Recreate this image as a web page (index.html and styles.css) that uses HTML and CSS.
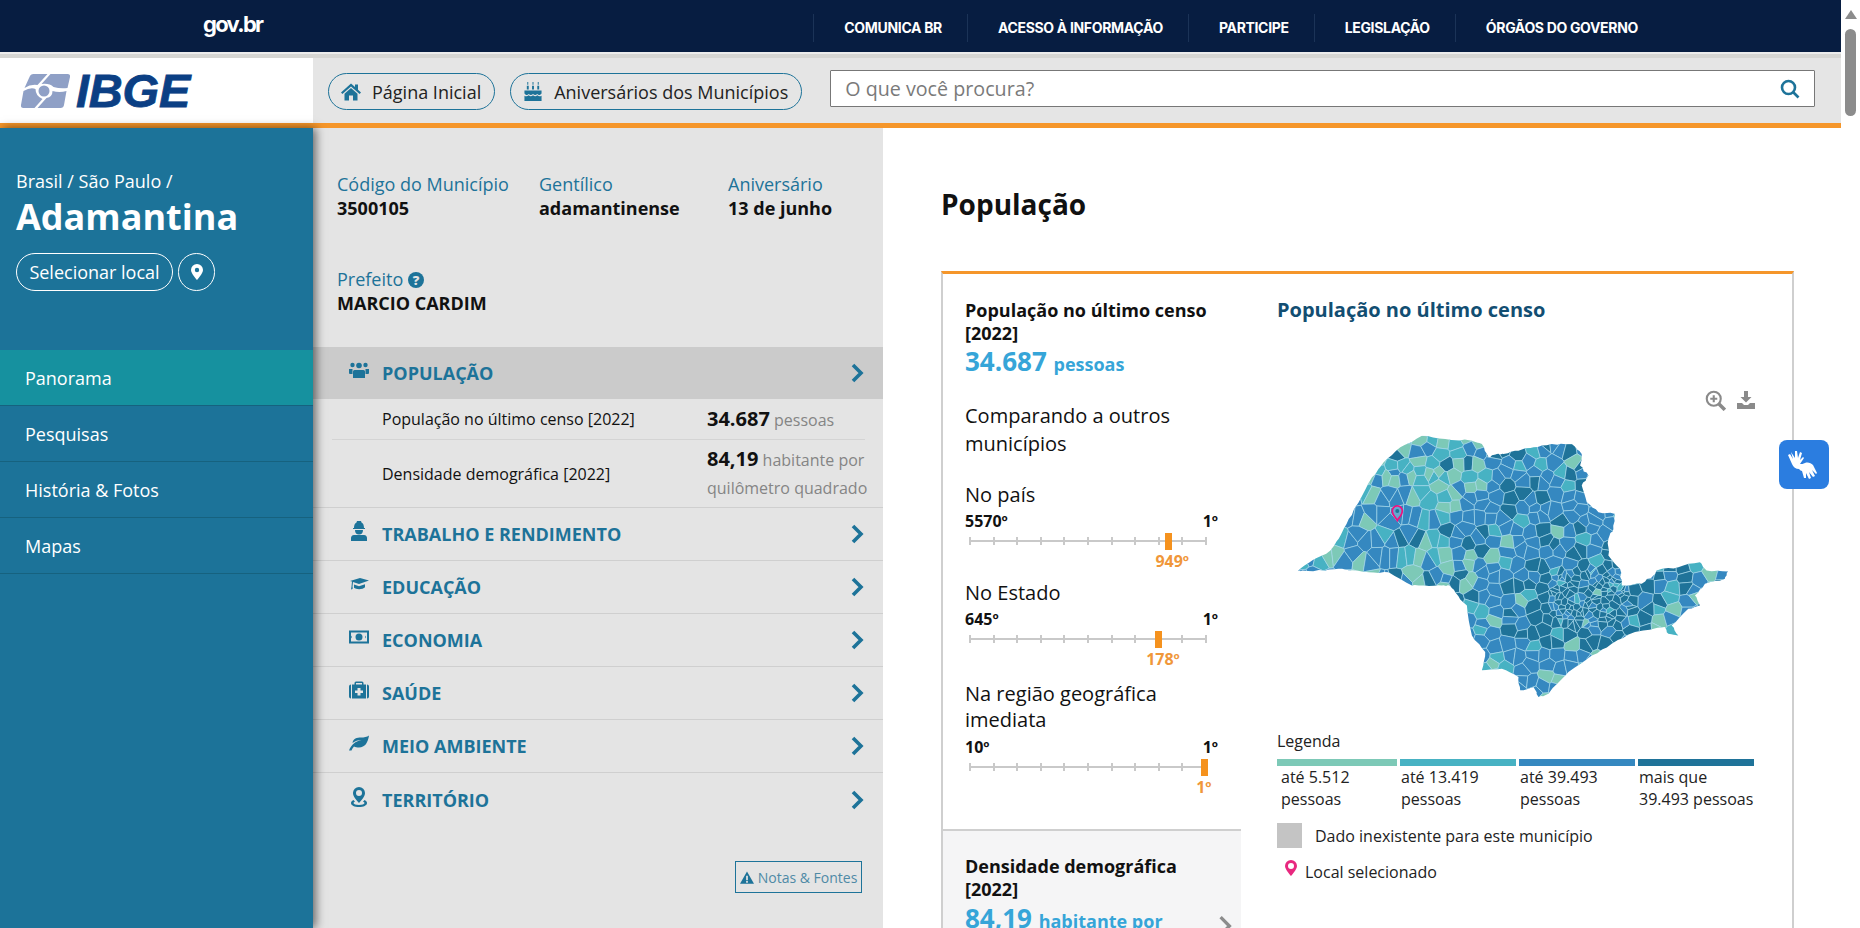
FILE: index.html
```html
<!DOCTYPE html>
<html lang="pt-BR">
<head>
<meta charset="utf-8">
<title>Adamantina - Panorama</title>
<link rel="stylesheet" href="styles.css">
</head>
<body>
<div class="page">
  <div class="site">
    <header class="gov-bar">
      <a class="gov-logo">gov.br</a>
      <nav class="gov-nav">
        <a>COMUNICA BR</a><a>ACESSO À INFORMAÇÃO</a><a>PARTICIPE</a><a>LEGISLAÇÃO</a><a>ÓRGÃOS DO GOVERNO</a>
      </nav>
    </header>
    <div class="band"></div>
    <div class="header">
      <div class="logo">
        <svg class="emblem" viewBox="0 0 50 34"><path class="em-fill" d="M9 3Q10 0 13 0H27L17 11Q10 10 4 14ZM30 0H47Q50 0 49.500 3L47 14Q40 15 33 13Q29 9 21 10ZM3 17Q10 13 15 15Q15 22 22 25L14 34H3Q0 34 .5 31ZM17 34 26 24Q32 23 32 17Q39 19 46 17L43.500 31Q43 34 40 34Z"/><circle class="em-fill" cx="23.500" cy="17" r="5.500"/></svg>
        <span class="logo-text">IBGE</span>
      </div>
      <div class="tools">
        <a class="pill">
          <svg class="pill-ic" viewBox="0 0 20 18"><path d="M10 1 0 10l1.400 1.400L10 4l8.600 7.400L20 10l-3-2.700V2h-3v2.600zM3.500 11.200V18H8v-5h4v5h4.500v-6.800L10 5.500z"/></svg>
          Página Inicial
        </a>
        <a class="pill">
          <svg class="pill-ic" viewBox="0 0 20 20"><path d="M4 0h1v3H4zM9.500 0h1v3h-1zM15 0h1v3h-1zM3.500 4h2v4h-2zM9 4h2v4H9zM14.500 4h2v4h-2zM1 9h18v3c-2 2-3 2-4.500.500-1.500 1.500-3 1.500-4.500 0-1.500 1.500-3 1.500-4.500 0C4 14 3 14 1 12zM1 14.500c2 1 3 .5 4.500-.5 1.500 1.500 3 1.500 4.500 0 1.500 1.500 3 1.500 4.500 0 1.500 1 2.500 1.500 4.500.5V20H1z"/></svg>
          Aniversários dos Municípios
        </a>
        <div class="search">
          <span class="placeholder">O que você procura?</span>
          <svg class="search-ic" viewBox="0 0 20 20"><circle cx="8.500" cy="8.500" r="6.500"/><path d="M13.500 13.500 18.500 18.500"/></svg>
        </div>
      </div>
    </div>

    <div class="content">
      <aside class="sidebar">
        <div class="crumb">Brasil / São Paulo /</div>
        <div class="city">Adamantina</div>
        <div class="select-row">
          <a class="select-btn">Selecionar local</a>
          <a class="pin-btn"><svg viewBox="0 0 12 16"><path fill-rule="evenodd" d="M6 0a6 6 0 0 0-6 6c0 3.500 6 10 6 10s6-6.500 6-10a6 6 0 0 0-6-6zm0 8.200a2.200 2.200 0 1 1 0-4.400 2.200 2.200 0 0 1 0 4.400z"/></svg></a>
        </div>
        <nav class="menu">
          <a class="menu-item active">Panorama</a>
          <a class="menu-item">Pesquisas</a>
          <a class="menu-item">História &amp; Fotos</a>
          <a class="menu-item">Mapas</a>
        </nav>
      </aside>

      <section class="panel">
        <div class="facts">
          <div><div class="fact-label">Código do Município</div><div class="fact-value">3500105</div></div>
          <div><div class="fact-label">Gentílico</div><div class="fact-value">adamantinense</div></div>
          <div><div class="fact-label">Aniversário</div><div class="fact-value">13 de junho</div></div>
        </div>
        <div class="mayor">
          <div class="fact-label">Prefeito <span class="help">?</span></div>
          <div class="fact-value">MARCIO CARDIM</div>
        </div>

        <div class="accordion">
          <div class="acc-row open">
            <svg class="acc-ic" viewBox="0 0 20 16"><circle cx="10" cy="3.500" r="2.800"/><circle cx="3.500" cy="3" r="2.200"/><circle cx="16.500" cy="3" r="2.200"/><path d="M5.500 8h9a1.500 1.500 0 0 1 1.500 1.500V16H4V9.500A1.500 1.500 0 0 1 5.500 8zM0 7h3.500v5H1a1 1 0 0 1-1-1zM20 7h-3.500v5H19a1 1 0 0 0 1-1z"/></svg>
            <span class="acc-title">POPULAÇÃO</span>
            <svg class="chev" viewBox="0 0 14 20"><path d="M3 2l8 8-8 8"/></svg>
          </div>
          <div class="stat-row first">
            <span class="stat-name">População no último censo [2022]</span>
            <span class="stat-val"><b>34.687</b> pessoas</span>
          </div>
          <div class="stat-row second">
            <span class="stat-name">Densidade demográfica [2022]</span>
            <span class="stat-val"><b>84,19</b> habitante por quilômetro quadrado</span>
          </div>
          <div class="acc-row">
            <svg class="acc-ic" viewBox="0 0 20 20"><path d="M5 7c0-3 1-5 2.500-5.500L8 0h4l.5 1.500C14 2 15 4 15 7h1v1H4V7zM6 9h8c0 3-1.500 4.500-4 4.500S6 12 6 9zM5 14h10c2 0 3 1.500 3 3v3H2v-3c0-1.500 1-3 3-3z"/></svg>
            <span class="acc-title">TRABALHO E RENDIMENTO</span>
            <svg class="chev" viewBox="0 0 14 20"><path d="M3 2l8 8-8 8"/></svg>
          </div>
          <div class="acc-row">
            <svg class="acc-ic" viewBox="0 0 20 14"><path d="M1 4 11 1l9 2.500-10 3.500-6-2-.5 4.500c0 .5.500 1.500 0 2.500l-1.500.5c0-1 .5-2 .5-3L3 4.500zM5 7.500l5 1.800 6-2v3c-2 2.500-9 2.500-11 .500z"/></svg>
            <span class="acc-title">EDUCAÇÃO</span>
            <svg class="chev" viewBox="0 0 14 20"><path d="M3 2l8 8-8 8"/></svg>
          </div>
          <div class="acc-row">
            <svg class="acc-ic" viewBox="0 0 20 13"><path fill-rule="evenodd" d="M0 0h20v13H0zM2 2v9h16V2zM10 3a3.500 3.500 0 1 1 0 7 3.500 3.500 0 0 1 0-7zM3 5a2 2 0 0 0 0 3zM17 5v3a2 2 0 0 1 0-3z"/></svg>
            <span class="acc-title">ECONOMIA</span>
            <svg class="chev" viewBox="0 0 14 20"><path d="M3 2l8 8-8 8"/></svg>
          </div>
          <div class="acc-row">
            <svg class="acc-ic" viewBox="0 0 20 17"><path fill-rule="evenodd" d="M0 5a2 2 0 0 1 2-2v14a2 2 0 0 1-2-2zM20 5a2 2 0 0 0-2-2v14a2 2 0 0 0 2-2zM7 0h6a1.500 1.500 0 0 1 1.500 1.500V3H17v14H3V3h2.500V1.500A1.500 1.500 0 0 1 7 0zm0 1.500V3h6V1.500zM8.500 6.500v2.500H6v2.500h2.500V14h3v-2.500H14V9h-2.500V6.500z"/></svg>
            <span class="acc-title">SAÚDE</span>
            <svg class="chev" viewBox="0 0 14 20"><path d="M3 2l8 8-8 8"/></svg>
          </div>
          <div class="acc-row">
            <svg class="acc-ic" viewBox="0 0 20 15"><path d="M20 0c-1 7-4 12-10 12-2 0-3.500-.3-5-1-1 1-1.800 2.500-2.500 4H0c1-3 3-6 6-8 2-1.300 4-2 6.500-2.500-3.500 0-6.500 1-9 3C4 3 8 2 12 2c3 0 6-.5 8-2z"/></svg>
            <span class="acc-title">MEIO AMBIENTE</span>
            <svg class="chev" viewBox="0 0 14 20"><path d="M3 2l8 8-8 8"/></svg>
          </div>
          <div class="acc-row last">
            <svg class="acc-ic" viewBox="0 0 20 20"><path fill-rule="evenodd" d="M10 0a6 6 0 0 0-6 6c0 3 3 7 6 10 3-3 6-7 6-10a6 6 0 0 0-6-6zm0 3a3 3 0 1 1 0 6 3 3 0 0 1 0-6zM4.500 13l1.500 1.800c-1 .3-1.500.7-1.500 1.200 0 1 2.500 2 5.500 2s5.500-1 5.500-2c0-.5-.5-.9-1.500-1.200l1.500-1.800c2 .8 2.500 2 2.500 3 0 2.500-3.500 4-8 4s-8-1.500-8-4c0-1 .5-2.200 2.500-3z"/></svg>
            <span class="acc-title">TERRITÓRIO</span>
            <svg class="chev" viewBox="0 0 14 20"><path d="M3 2l8 8-8 8"/></svg>
          </div>
        </div>

        <div class="notes-wrap">
          <a class="notes">
            <svg viewBox="0 0 16 14"><path fill-rule="evenodd" d="M8 0 16 14H0zM7 5v5h2V5zM7 11v2h2v-2z"/></svg>
            Notas &amp; Fontes
          </a>
        </div>
      </section>

      <main class="main">
        <h1 class="page-title">População</h1>
        <article class="card">
          <div class="card-left">
            <section class="ind active">
              <div class="ind-title">População no último censo [2022]</div>
              <div class="ind-value">34.687 <small>pessoas</small></div>
              <div class="compare">Comparando a outros municípios</div>

              <div class="rank">
                <div class="rank-label">No país</div>
                <div class="ends"><span>5570º</span><span>1º</span></div>
                <div class="scale">
                  <i></i><i></i><i></i><i></i><i></i><i></i><i></i><i></i><i></i><i></i><i></i>
                  <b class="marker" style="left:83.8%"></b>
                </div>
                <div class="pos"><span style="left:85.4%">949º</span></div>
              </div>

              <div class="rank">
                <div class="rank-label">No Estado</div>
                <div class="ends"><span>645º</span><span>1º</span></div>
                <div class="scale">
                  <i></i><i></i><i></i><i></i><i></i><i></i><i></i><i></i><i></i><i></i><i></i>
                  <b class="marker" style="left:79.6%"></b>
                </div>
                <div class="pos"><span style="left:81.5%">178º</span></div>
              </div>

              <div class="rank">
                <div class="rank-label">Na região geográfica imediata</div>
                <div class="ends"><span>10º</span><span>1º</span></div>
                <div class="scale">
                  <i></i><i></i><i></i><i></i><i></i><i></i><i></i><i></i><i></i><i></i><i></i>
                  <b class="marker" style="left:98.9%"></b>
                </div>
                <div class="pos"><span style="left:98.7%">1º</span></div>
              </div>
            </section>
            <section class="ind other">
              <div class="ind-title">Densidade demográfica [2022]</div>
              <div class="ind-value">84,19 <small>habitante por quilômetro quadrado</small></div>
              <svg class="other-chev" viewBox="0 0 14 20"><path d="M3 2l8 8-8 8"/></svg>
            </section>
          </div>

          <div class="card-right">
            <h2 class="chart-title">População no último censo</h2>
            <div class="chart-tools">
              <svg class="zoom-ic" viewBox="0 0 18 18"><circle cx="7.500" cy="7.500" r="6"/><path d="M4.500 7.500h6M7.500 4.500v6"/><path class="thick" d="M12 12l5 5"/></svg>
              <svg viewBox="0 0 18 18"><path class="solid" d="M7 0h4v6h3.500L9 11.500 3.500 6H7zM0 12h5l2 2h4l2-2h5v6H0z"/></svg>
            </div>
            <svg id="state-map" class="state-map" viewBox="100 150 1330 820">
              <defs>
                <clipPath id="sp-outline"><polygon id="sp-poly" points="118,575 160,545 215,515 240,480 270,420 300,370 340,295 375,250 425,205 490,170 560,180 640,185 670,195 690,235 715,225 735,225 780,215 825,205 880,195 940,195 970,225 965,260 990,290 970,320 985,370 1020,400 1070,405 1065,450 1050,480 1050,530 1085,570 1090,620 1150,615 1185,590 1195,575 1260,565 1325,550 1345,575 1410,578 1400,600 1340,615 1310,650 1325,680 1290,690 1240,740 1260,770 1230,765 1220,745 1130,760 1060,795 1000,830 930,880 870,945 840,955 825,925 785,935 780,895 730,870 670,875 680,820 640,770 625,680 590,640 575,620 550,620 500,620 460,620 390,580 330,580 250,570 200,575 130,575"/></clipPath>
              </defs>
              <g id="sp-cells" clip-path="url(#sp-outline)"></g>
              <path class="map-pin" d="M416 425c-6-10-15-18-15-29a15 15 0 0 1 30 0c0 11-9 19-15 29z"/>
              <circle class="map-pin-dot" cx="416" cy="396" r="6"/>
            </svg>
            <div class="legend-title">Legenda</div>
            <div class="legend">
              <div class="leg"><i class="c0"></i><span>até 5.512 pessoas</span></div>
              <div class="leg"><i class="c1"></i><span>até 13.419 pessoas</span></div>
              <div class="leg"><i class="c2"></i><span>até 39.493 pessoas</span></div>
              <div class="leg"><i class="c3"></i><span>mais que 39.493 pessoas</span></div>
            </div>
            <div class="no-data"><i></i><span>Dado inexistente para este município</span></div>
            <div class="selected">
              <svg viewBox="0 0 12 16"><path fill-rule="evenodd" d="M6 0a6 6 0 0 0-6 6c0 3.500 6 10 6 10s6-6.500 6-10a6 6 0 0 0-6-6zm0 9a3 3 0 1 1 0-6 3 3 0 0 1 0 6z"/></svg>
              <span>Local selecionado</span>
            </div>
          </div>
        </article>
      </main>
    </div>
  </div>

  <div class="scrollbar">
    <span class="sb-arrow"></span>
    <span class="sb-thumb"></span>
  </div>

  <a class="vlibras">
    <svg viewBox="0 0 34 30"><path d="M4 2l4 6 0-7 2 0 1 7 2-6 2 1-2 7 3-3 1 1-4 6c2 0 3 0 5-1 3-1 6 0 8 2l4 8-1 1-4-4 3 6-2 1-4-5 2 6-2 1-3-6 0 5-2 0-2-7c-1 0-2-1-3-2-3 0-6-2-7-5L1 5l2-1 3 5z"/></svg>
  </a>
</div>
<script src="map.js"></script>
</body>
</html>
```
FILE: styles.css
```css
* { box-sizing: border-box; }
html, body { margin: 0; height: 100%; }
body { font-family: "Open Sans", "Noto Sans", sans-serif; color: #111; background: #fff; overflow: hidden; }
a { color: inherit; text-decoration: none; }

.page { display: flex; height: 928px; overflow: hidden; position: relative; }
.site { flex: 1; min-width: 0; display: flex; flex-direction: column; height: 928px; overflow: hidden; }

/* gov bar */
.gov-bar { height: 52px; background: #071d41; display: flex; align-items: center; color: #fff; flex: none; }
.gov-logo { margin-left: 203px; font: 700 22px/24px Inter, sans-serif; letter-spacing: -1.7px; position: relative; top: -2px; }
.gov-nav { margin-left: 551px; display: flex; align-items: center; position: relative; top: 2px; }
.gov-nav a { font: 700 14px/28px Inter, sans-serif; letter-spacing: -.33px; padding: 0 25px 0 30px; border-left: 1px solid #1b3357; white-space: nowrap; }
.band { height: 6px; flex: none; background: #d6d6d3; border-top: 2px solid #ececec; }

/* header */
.header { height: 70px; flex: none; display: flex; border-bottom: 5px solid #f5962a; background: #e5e5e5; }
.logo { width: 313px; background: #fff; display: flex; align-items: center; padding-left: 18px; gap: 3px; }
.emblem { width: 55px; height: 34px; }
.em-fill { fill: #8fa0c6; }
.logo-text { font: italic 700 47px/34px "Liberation Sans", sans-serif; color: #0b3f84; letter-spacing: -.2px; -webkit-text-stroke: .8px #0b3f84; }
.tools { flex: 1; display: flex; align-items: center; padding: 0 26px 0 15px; gap: 15px; }
.pill { height: 37px; margin-top: 2px; border: 1px solid #1d7399; border-radius: 19px; display: flex; align-items: center; font-size: 18px; color: #222; padding: 0 13px 0 12px; gap: 11px; white-space: nowrap; }
.pill-ic { width: 20px; height: 19px; fill: #1d7399; flex: none; }
.search { flex: 1; margin: 0 0 4px 13px; height: 37px; background: #fff; border: 1px solid #777; border-radius: 1px; display: flex; align-items: center; justify-content: space-between; padding: 0 14px; }
.placeholder { font-size: 19.700px; color: #7a7a7a; }
.search-ic { width: 20px; height: 20px; fill: none; stroke: #1d7399; stroke-width: 2.600; }

/* content */
.content { flex: 1; display: flex; min-height: 0; }
.sidebar { width: 313px; flex: none; background: #1c7399; color: #fff; padding-top: 40px; position: relative; z-index: 1; box-shadow: 3px 0 9px rgba(0,0,0,.55); }
.crumb { margin-left: 16px; font-size: 18px; line-height: 27px; }
.city { margin-left: 16px; font-size: 36px; font-weight: 700; line-height: 44px; }
.select-row { display: flex; gap: 5px; margin: 14px 0 0 16px; }
.select-btn { width: 157px; height: 38px; border: 1px solid #fff; border-radius: 19px; display: flex; align-items: center; justify-content: center; font-size: 18px; }
.pin-btn { width: 37px; height: 38px; border: 1px solid #fff; border-radius: 19px; display: flex; align-items: center; justify-content: center; }
.pin-btn svg { width: 12px; height: 16px; fill: #fff; }
.menu { margin-top: 59px; }
.menu-item { display: block; height: 56px; line-height: 56px; padding-left: 25px; font-size: 18px; border-bottom: 1px solid #16627f; }
.menu-item.active { background: #16919f; }

/* panel */
.panel { width: 570px; flex: none; background: #e4e4e4; padding-top: 44px; }
.facts { display: grid; grid-template-columns: 202px 189px auto; padding-left: 24px; }
.fact-label { color: #1d7399; font-size: 18px; line-height: 24px; }
.fact-value { font-size: 18px; font-weight: 700; line-height: 24px; color: #111; }
.mayor { margin-top: 47px; padding-left: 24px; }
.help { display: inline-flex; width: 16px; height: 16px; border-radius: 50%; background: #1d7399; color: #e4e4e4; font-size: 13px; font-weight: 800; line-height: 16px; align-items: center; justify-content: center; vertical-align: 1px; }
.accordion { margin-top: 32px; }
.acc-row { height: 53px; display: flex; align-items: center; padding: 0 19px 0 36px; border-bottom: 1px solid #cfcfcf; color: #1d7399; }
.acc-row.open { height: 52px; background: #cbcbcb; border-bottom: 0; }
.acc-row.last { border-bottom: 0; }
.acc-ic { width: 20px; height: 20px; fill: #1d7399; flex: none; position: relative; top: -3px; }
.acc-title { font-size: 18px; font-weight: 700; margin-left: 13px; flex: 1; }
.chev { width: 14px; height: 20px; fill: none; stroke: #1d7399; stroke-width: 3.600; flex: none; }
.stat-row { display: grid; grid-template-columns: 325px 1fr; margin-left: 19px; padding-left: 50px; align-items: center; border-bottom: 1px solid #d4d4d4; margin-right: 18px; }
.stat-row.first { height: 41px; }
.stat-row.second { height: 68px; margin: 0; padding-left: 69px; padding-right: 10px; border-bottom-color: #cfcfcf; }
.stat-name { font-size: 16px; color: #111; }
.stat-val { font-size: 16px; line-height: 28px; color: #858585; }
.stat-val b { font-size: 20px; color: #111; }
.notes-wrap { display: flex; justify-content: flex-end; margin: 35px 21px 0 0; }
.notes { height: 32px; width: 127px; border: 1px solid #1d7399; display: flex; align-items: center; justify-content: center; gap: 4px; font-size: 14px; color: #4f8aa6; white-space: nowrap; }
.notes svg { width: 14px; height: 13px; fill: #1d7399; }

/* main */
.main { flex: 1; min-width: 0; padding: 58px 47px 0 58px; background: #fff; }
.page-title { margin: 0; font-size: 28px; line-height: 36px; font-weight: 700; color: #111; }
.card { margin-top: 49px; display: flex; border: 2px solid #cfcfcf; border-top: 3px solid #f5962a; border-bottom: 0; }
.card-left { width: 298px; flex: none; }
.ind { padding: 25px 22px 0 22px; position: relative; }
.ind.active { height: 555px; }
.ind.other { background: #f5f5f6; border-top: 2px solid #cfcfcf; height: 400px; padding-top: 24px; }
.ind-title { font-size: 18px; font-weight: 700; line-height: 23px; color: #111; }
.ind-value { font-size: 26px; font-weight: 700; line-height: 32px; color: #36a5d8; }
.ind.other .ind-value { line-height: 36px; margin-top: -1px; }
.ind-value small { font-size: 18px; }
.compare { margin-top: 22px; font-size: 20px; line-height: 27.500px; width: 225px; color: #111; }
.rank { margin-top: 8.700px; position: relative; width: 253px; }
.rank:last-child { margin-top: 11.900px; }
.compare + .rank { margin-top: 24.500px; }
.rank-label { font-size: 20px; line-height: 26px; width: 225px; }
.ends { display: flex; justify-content: space-between; font-size: 16px; font-weight: 700; line-height: 20px; margin-top: 3.500px; }
.scale { height: 20px; margin: 0 11px 0 4px; display: flex; justify-content: space-between; align-items: center; position: relative; background: linear-gradient(#c9c9c9, #c9c9c9) 0 50%/100% 2px no-repeat; }
.scale i { width: 2px; height: 8px; background: #c9c9c9; }
.marker { position: absolute; top: 2px; width: 7px; height: 17px; background: #f5921e; margin-left: -3.500px; }
.pos { height: 20px; margin: 0 11px 0 4px; position: relative; font-size: 16px; font-weight: 700; line-height: 20px; color: #f0973a; }
.pos span { position: absolute; transform: translateX(-50%); }
.other-chev { position: absolute; right: 8px; top: 84px; width: 16px; height: 22px; fill: none; stroke: #8c8c8c; stroke-width: 3; }

.card-right { flex: 1; min-width: 0; padding: 24px 37px 0 36px; }
.chart-title { margin: 0; font-size: 20px; font-weight: 700; line-height: 24px; color: #124e72; }
.chart-tools { display: flex; justify-content: flex-end; align-items: center; gap: 11px; margin-top: 69px; height: 18px; }
.chart-tools svg { width: 18px; height: 18px; fill: none; stroke: #8a8a8a; stroke-width: 1.800; }
.chart-tools .zoom-ic { width: 21px; height: 21px; }
.chart-tools .thick { stroke-width: 3; }
.chart-tools .solid { fill: #8a8a8a; stroke: none; }
.state-map { display: block; width: 443px; height: 273px; margin: 20px 0 0 15px; }
.map-pin { fill: rgba(255,255,255,.25); stroke: #ef0f7f; stroke-width: 5; }
.map-pin-dot { fill: #1c7399; }
.legend-title { margin-top: 27px; font-size: 16px; line-height: 24px; color: #222; }
.legend { display: grid; grid-template-columns: 120px 116px 116px 116px; gap: 3px; margin-top: 6px; }
.leg i { display: block; height: 7px; }
.leg span { display: block; font-size: 16px; line-height: 22px; color: #222; padding-left: 1px; }
.leg:first-child span { padding-left: 4px; padding-right: 20px; }
.c0 { background: #7dc9b7; }
.c1 { background: #47b2c3; }
.c2 { background: #3588c0; }
.c3 { background: #1f7399; }
.no-data { display: flex; align-items: center; gap: 13px; margin-top: 13px; font-size: 16px; color: #222; }
.no-data i { display: block; width: 25px; height: 25px; background: #c4c4c4; }
.selected { display: flex; align-items: center; gap: 8px; margin: 13px 0 0 8px; font-size: 16px; color: #222; }
.selected svg { width: 12px; height: 16px; fill: #e8287f; position: relative; top: -4px; }

/* scrollbar */
.scrollbar { width: 19px; flex: none; background: #fff; position: relative; display: flex; flex-direction: column; align-items: center; }
.sb-arrow { width: 0; height: 0; border-left: 6px solid transparent; border-right: 6px solid transparent; border-bottom: 9px solid #8c8c8c; margin-top: 10px; }
.sb-thumb { width: 11px; height: 87px; background: #8c8c8c; border-radius: 6px; margin-top: 10px; }

/* floating accessibility button */
.vlibras { position: absolute; left: 1779px; top: 440px; width: 50px; height: 49px; background: #2b7de0; border-radius: 8px; display: flex; align-items: center; justify-content: center; }
.vlibras svg { width: 34px; height: 30px; fill: #fff; }

/* map cells */
.cell { stroke: #a5d8ea; stroke-width: 2; }
.f0 { fill: #7dc9b7; }
.f1 { fill: #47b2c3; }
.f2 { fill: #3588c0; }
.f3 { fill: #1f7399; }
```
FILE: map.js
```js
// Draws the municipalities of the state as a seeded Voronoi mosaic clipped to the outline.
(function () {
  var NS = "http://www.w3.org/2000/svg";
  var group = document.getElementById("sp-cells");
  var seed = 20220;
  function rnd() {
    seed = (seed * 1664525 + 1013904223) % 4294967296;
    return seed / 4294967296;
  }

  // roughen the state outline so it does not look like straight segments
  var outline = document.getElementById("sp-poly");
  var pts = outline.getAttribute("points").trim().split(/\s+/).map(function (p) {
    return p.split(",").map(Number);
  });
  var rough = [];
  pts.forEach(function (p, i) {
    var q = pts[(i + 1) % pts.length];
    for (var k = 0; k < 4; k++) {
      var t = k / 4;
      var j = k === 0 ? 0 : 5;
      rough.push((p[0] + (q[0] - p[0]) * t + (rnd() - 0.5) * j).toFixed(1) + "," + (p[1] + (q[1] - p[1]) * t + (rnd() - 0.5) * j).toFixed(1));
    }
  });
  outline.setAttribute("points", rough.join(" "));

  var seeds = [];
  var x, y;
  // general grid
  for (y = 150; y < 980; y += 34) {
    for (x = 100; x < 1430; x += 38) {
      if (x < 540 && y > 290 && y < 640) continue;
      seeds.push([x + rnd() * 28 - 14, y + rnd() * 26 - 13]);
    }
  }
  // western part: long narrow municipalities, running NNE-SSW
  for (y = 290; y < 650; y += 62) {
    for (x = 60; x < 640; x += 25) {
      var sx = x + (y - 290) * -0.32 + rnd() * 10 - 5;
      if (sx > 540 || sx < 100) continue;
      seeds.push([sx, y + rnd() * 30 - 15]);
    }
  }
  // metropolitan area: many small municipalities
  for (var m = 0; m < 110; m++) {
    seeds.push([880 + rnd() * 240, 570 + rnd() * 170]);
  }

  function clip(poly, a, b) {
    var mx = (a[0] + b[0]) / 2, my = (a[1] + b[1]) / 2;
    var nx = b[0] - a[0], ny = b[1] - a[1];
    var out = [];
    for (var i = 0; i < poly.length; i++) {
      var p = poly[i], q = poly[(i + 1) % poly.length];
      var dp = (p[0] - mx) * nx + (p[1] - my) * ny;
      var dq = (q[0] - mx) * nx + (q[1] - my) * ny;
      if (dp <= 0) out.push(p);
      if (dp * dq < 0) {
        var t = dp / (dp - dq);
        out.push([p[0] + (q[0] - p[0]) * t, p[1] + (q[1] - p[1]) * t]);
      }
    }
    return out;
  }
  function pick(px, py) {
    var r = rnd();
    var metro = px > 800 && px < 1180 && py > 520 && py < 800;
    var north = py < 330 && px < 730;
    var west = px < 720 && py < 640;
    var south = py > 800;
    var weights;
    if (metro) weights = [0.02, 0.06, 0.22, 0.7];
    else if (px > 1180) weights = [0.14, 0.2, 0.36, 0.3];
    else if (south) weights = [0.18, 0.22, 0.46, 0.14];
    else if (north) weights = [0.36, 0.26, 0.26, 0.12];
    else if (west) weights = [0.18, 0.16, 0.5, 0.16];
    else weights = [0.08, 0.12, 0.5, 0.3];
    var sum = 0;
    for (var k = 0; k < 4; k++) {
      sum += weights[k];
      if (r < sum) return k;
    }
    return 3;
  }
  seeds.forEach(function (s) {
    var poly = [[s[0] - 160, s[1] - 160], [s[0] + 160, s[1] - 160], [s[0] + 160, s[1] + 160], [s[0] - 160, s[1] + 160]];
    seeds.forEach(function (o) {
      if (o === s) return;
      if (Math.abs(o[0] - s[0]) > 200 || Math.abs(o[1] - s[1]) > 200) return;
      poly = clip(poly, s, o);
    });
    if (poly.length < 3) return;
    var el = document.createElementNS(NS, "polygon");
    el.setAttribute("points", poly.map(function (p) { return p[0].toFixed(1) + "," + p[1].toFixed(1); }).join(" "));
    el.setAttribute("class", "cell f" + pick(s[0], s[1]));
    group.appendChild(el);
  });
})();
```
